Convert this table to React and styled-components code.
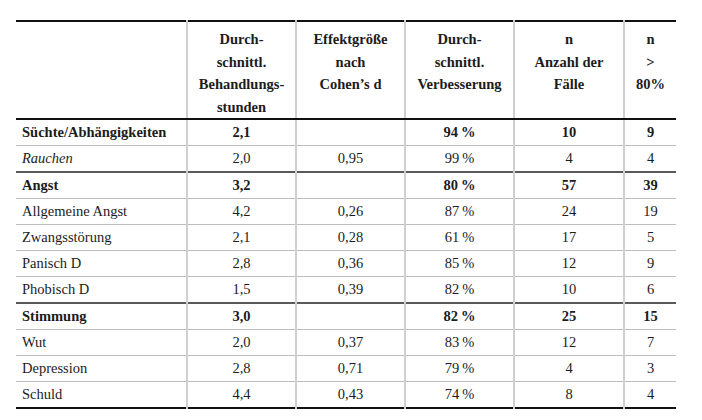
import styled, { createGlobalStyle } from "styled-components";

const GlobalStyle = createGlobalStyle`
  body {
    margin: 0;
    background: #fff;
    font-family: "Liberation Serif", "DejaVu Serif", serif;
    color: #1c1c1c;
  }
`;

const Page = styled.div`
  padding: 20px 0 0 16px;
  width: 702px;
  height: 420px;
  box-sizing: border-box;
`;

const Table = styled.table`
  width: 660px;
  border-collapse: collapse;
  table-layout: fixed;
  border-top: 2px solid #111;
  border-bottom: 2px solid #111;
  font-family: "Liberation Serif", "DejaVu Serif", serif;
  font-size: 14.5px;
  color: #1c1c1c;
`;

const HeadCell = styled.th`
  height: 98px;
  padding: 6px 2px 0;
  box-sizing: border-box;
  vertical-align: top;
  text-align: center;
  font-family: "Liberation Serif", serif;
  font-weight: bold;
  line-height: 22.5px;
  border-bottom: 2px solid #111;
  border-left: ${(props) => (props.$first ? "none" : "2px solid #cfcfcf")};
`;

const Row = styled.tr`
  border-top: ${(props) =>
    props.$group ? "2px solid #5a5a5a" : "1px solid #bdbdbd"};
`;

const Cell = styled.td`
  height: 25px;
  padding: 0 6px;
  text-align: ${(props) => (props.$first ? "left" : "center")};
  font-family: "Liberation Serif", serif;
  font-weight: ${(props) => (props.$bold ? "bold" : "normal")};
  font-style: ${(props) => (props.$italic ? "italic" : "normal")};
  border-left: ${(props) => (props.$first ? "none" : "2px solid #cfcfcf")};
  white-space: nowrap;
`;

const columns = [
  { width: 171, lines: [] },
  { width: 109, lines: ["Durch-", "schnittl.", "Behandlungs-", "stunden"] },
  { width: 109, lines: ["Effektgröße", "nach", "Cohen’s d"] },
  { width: 109, lines: ["Durch-", "schnittl.", "Verbesserung"] },
  { width: 110, lines: ["n", "Anzahl der", "Fälle"] },
  { width: 52, lines: ["n", ">", "80%"] },
];

const pct = (v) => `${v}\u2009%`;

const rows = [
  { label: "Süchte/Abhängigkeiten", bold: true, values: ["2,1", "", pct(94), "10", "9"] },
  { label: "Rauchen", italic: true, values: ["2,0", "0,95", pct(99), "4", "4"] },
  { label: "Angst", bold: true, group: true, values: ["3,2", "", pct(80), "57", "39"] },
  { label: "Allgemeine Angst", values: ["4,2", "0,26", pct(87), "24", "19"] },
  { label: "Zwangsstörung", values: ["2,1", "0,28", pct(61), "17", "5"] },
  { label: "Panisch D", values: ["2,8", "0,36", pct(85), "12", "9"] },
  { label: "Phobisch D", values: ["1,5", "0,39", pct(82), "10", "6"] },
  { label: "Stimmung", bold: true, group: true, values: ["3,0", "", pct(82), "25", "15"] },
  { label: "Wut", values: ["2,0", "0,37", pct(83), "12", "7"] },
  { label: "Depression", values: ["2,8", "0,71", pct(79), "4", "3"] },
  { label: "Schuld", values: ["4,4", "0,43", pct(74), "8", "4"] },
];

const App = () => {
  return (
    <>
      <GlobalStyle />
      <Page>
        <Table>
          <colgroup>
            {columns.map((col, i) => (
              <col key={i} style={{ width: col.width }} />
            ))}
          </colgroup>
          <thead>
            <tr>
              {columns.map((col, i) => (
                <HeadCell key={i} $first={i === 0}>
                  {col.lines.map((line, j) => (
                    <div key={j}>{line}</div>
                  ))}
                </HeadCell>
              ))}
            </tr>
          </thead>
          <tbody>
            {rows.map((row, i) => (
              <Row key={row.label} $group={row.group && i > 0}>
                <Cell $first $bold={row.bold} $italic={row.italic}>
                  {row.label}
                </Cell>
                {row.values.map((v, j) => (
                  <Cell key={j} $bold={row.bold}>
                    {v}
                  </Cell>
                ))}
              </Row>
            ))}
          </tbody>
        </Table>
      </Page>
    </>
  );
};

export default App;
